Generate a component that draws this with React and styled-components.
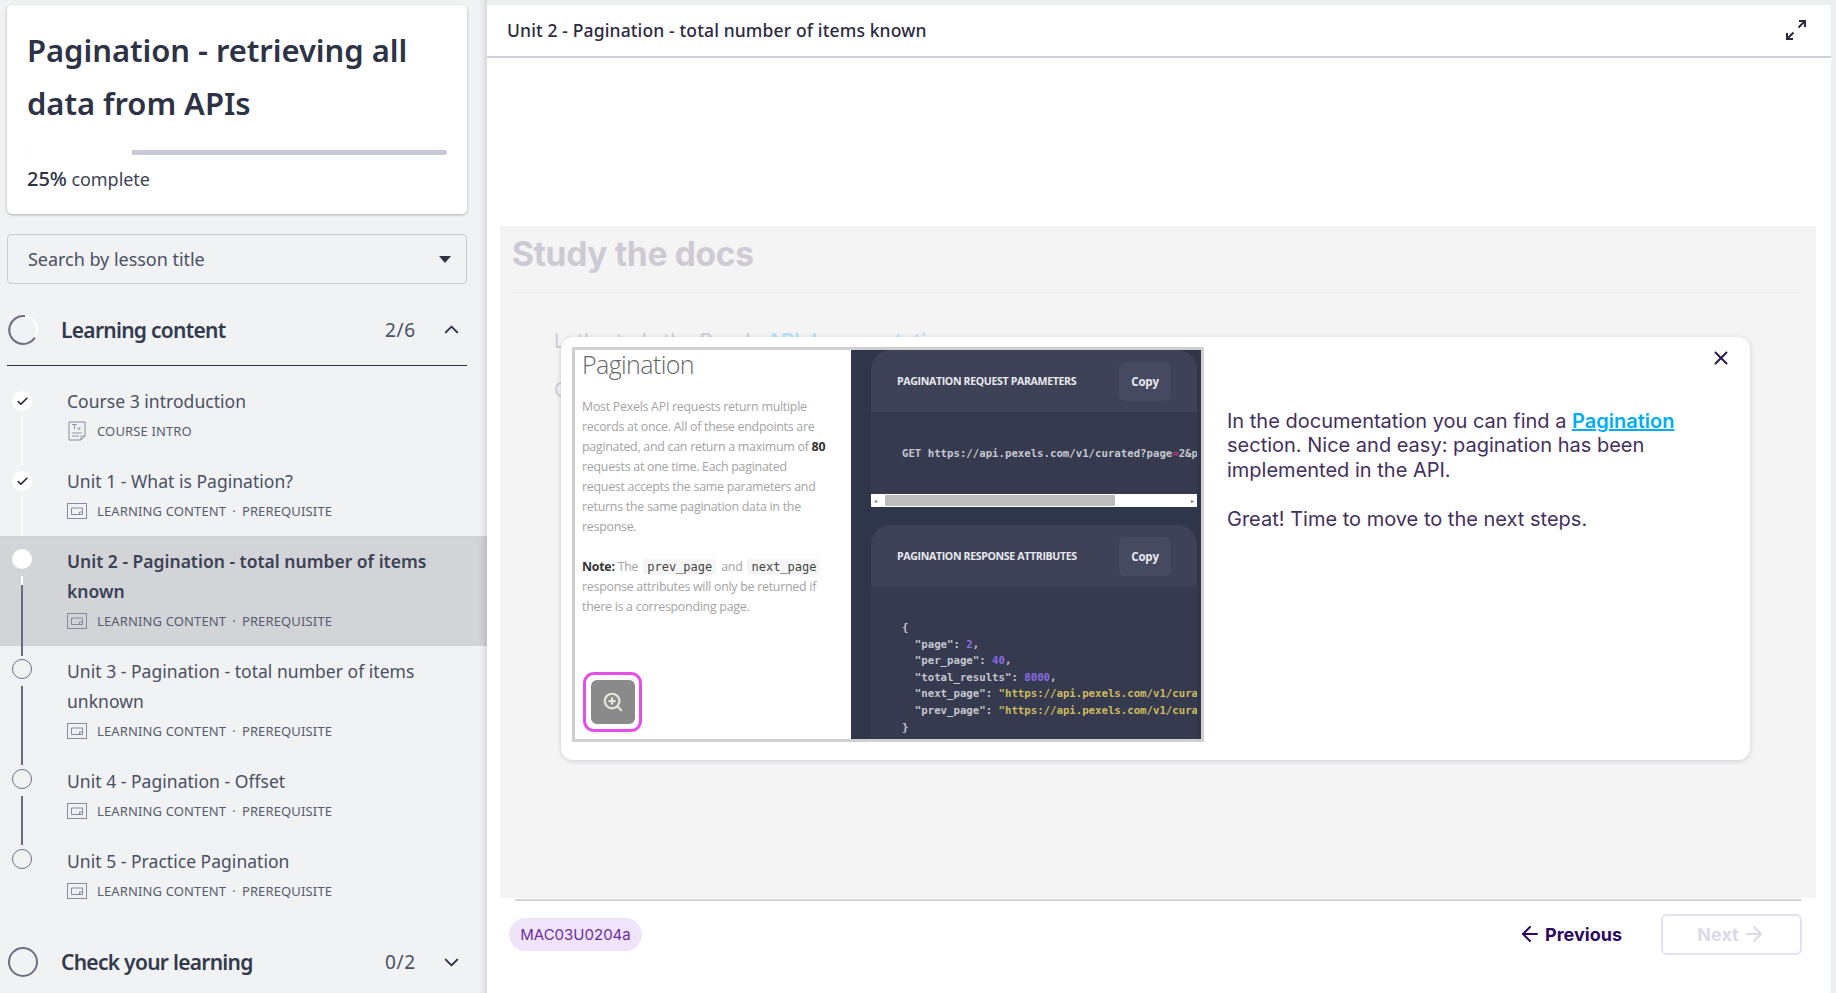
import styled, { createGlobalStyle } from 'styled-components'
import { Check, ChevronDown, ChevronUp, ArrowLeft, ArrowRight, X, ZoomIn } from 'lucide-react'

const GlobalStyle = createGlobalStyle`
  html, body { margin: 0; padding: 0; height: 100%; overflow: hidden; background: #fff; }
  * { box-sizing: border-box; }
`

const units = [
  { title: 'Course 3 introduction', kind: 'doc', meta: 'COURSE INTRO', state: 'done', line: 'light' },
  { title: 'Unit 1 - What is Pagination?', meta: 'LEARNING CONTENT', tag: 'PREREQUISITE', state: 'done', line: 'light' },
  { title: 'Unit 2 - Pagination - total number of items known', meta: 'LEARNING CONTENT', tag: 'PREREQUISITE', state: 'active', line: 'mixed' },
  { title: 'Unit 3 - Pagination - total number of items unknown', meta: 'LEARNING CONTENT', tag: 'PREREQUISITE', state: 'todo', line: 'dark' },
  { title: 'Unit 4 - Pagination - Offset', meta: 'LEARNING CONTENT', tag: 'PREREQUISITE', state: 'todo', line: 'dark' },
  { title: 'Unit 5 - Practice Pagination', meta: 'LEARNING CONTENT', tag: 'PREREQUISITE', state: 'todo' },
]

const Page = styled.div`
  display: grid;
  grid-template-columns: 487px 1fr;
  height: 993px;
  overflow: hidden;
  font-family: 'Noto Sans', sans-serif;
`

const Sidebar = styled.aside`
  background: #f1f2f4;
  padding-top: 5px;
  box-shadow: inset -7px 0 6px -5px rgba(60, 60, 70, 0.18);
  overflow: hidden;
`

const CourseCard = styled.div`
  margin: 0 20px 0 7px;
  height: 209px;
  padding: 19px 20px 0 20px;
  background: #fff;
  border-radius: 5px;
  box-shadow: 0 1px 3px rgba(40, 45, 60, 0.35);
`

const CourseTitle = styled.h1`
  margin: 0;
  font-size: 31px;
  line-height: 53px;
  font-weight: 600;
  letter-spacing: -0.05px;
  color: #2d3345;
`

const Track = styled.div`
  height: 5px;
  margin-top: 20px;
  background: #c7cad6;
  border-radius: 3px;
  overflow: hidden;
`

const Fill = styled.div`
  height: 100%;
  background: #fff;
`

const Complete = styled.p`
  margin: 10px 0 0;
  font-size: 18px;
  letter-spacing: -0.05px;
  color: #3c4256;
  strong { font-weight: 500; font-size: 20px; color: #2d3345; }
`

const SearchBox = styled.div`
  display: flex;
  align-items: center;
  justify-content: space-between;
  height: 50px;
  margin: 20px 20px 0 7px;
  padding: 0 15px 0 20px;
  border: 1px solid #c8cad2;
  border-radius: 4px;
  font-size: 18px;
  letter-spacing: -0.03px;
  color: #4a5063;
`

const Caret = styled.span`
  width: 0;
  height: 0;
  border-left: 6px solid transparent;
  border-right: 6px solid transparent;
  border-top: 7px solid #2d3345;
`

const SectionHead = styled.div`
  display: flex;
  align-items: center;
  height: ${p => p.$h}px;
  margin: ${p => p.$m};
  padding-top: ${p => p.$pt || 0}px;
  color: #2d3345;
  border-bottom: ${p => (p.$ruled ? '1px solid #2d3345' : 'none')};
`

const SectionName = styled.span`
  flex: 1;
  margin-left: 22px;
  font-size: 21px;
  font-weight: 600;
  letter-spacing: -0.72px;
  color: #333a4d;
`

const Count = styled.span`
  width: 55px;
  font-size: 19px;
  letter-spacing: 0.6px;
  color: #4a5063;
`

const ChevronSlot = styled.span`
  display: flex;
  width: 25px;
  margin-right: 2px;
  color: #2d3345;
`

const Row = styled.div`
  position: relative;
  padding: 10px 40px 0 67px;
  height: ${p => p.$h}px;
  background: ${p => (p.$active ? '#d3d4d8' : 'transparent')};
  box-shadow: ${p => (p.$active ? 'inset -7px 0 6px -5px rgba(60, 60, 70, 0.2)' : 'none')};
`

const Node = styled.span`
  position: absolute;
  left: 12px;
  top: ${p => (p.$done ? 15 : 13)}px;
  display: flex;
  align-items: center;
  justify-content: center;
  width: 20px;
  height: 20px;
  border-radius: 50%;
  background: ${p => (p.$filled ? '#fff' : 'transparent')};
  border: ${p => (p.$filled ? 'none' : '1px solid #6b7084')};
  color: #1f2433;
`

const Line = styled.span`
  position: absolute;
  left: 21px;
  top: ${p => p.$top}px;
  height: ${p => p.$len}px;
  width: 2px;
  background: ${p => p.$color};
`

const RowTitle = styled.div`
  font-size: 17.5px;
  line-height: 30px;
  letter-spacing: ${p => (p.$active ? '0' : '0.03px')};
  font-weight: ${p => (p.$active ? 600 : 400)};
  color: ${p => (p.$active ? '#3c4256' : '#4a5063')};
`

const RowMeta = styled.div`
  display: flex;
  align-items: center;
  height: 26px;
  margin-top: 2px;
  font-size: 13px;
  letter-spacing: 0.14px;
  color: #565c6e;
`

const MetaIcon = styled.svg`
  flex: none;
  width: 20px;
  height: 20px;
  margin-right: 10px;
  color: #858a9c;
`

const Dot = styled.span`
  margin: 0 6px;
`

const Main = styled.main`
  display: flex;
  flex-direction: column;
  background: #fff;
  margin-right: 5px;
  padding-top: 5px;
  position: relative;
  &::before {
    content: '';
    position: absolute;
    top: 0;
    left: 0;
    right: -5px;
    height: 5px;
    background: #eceef0;
  }
  &::after {
    content: '';
    position: absolute;
    top: 0;
    bottom: 0;
    right: -5px;
    width: 5px;
    background: #eceef0;
  }
`

const TopBar = styled.header`
  display: flex;
  align-items: center;
  justify-content: space-between;
  height: 53px;
  padding: 0 24px 1px 20px;
  border-bottom: 2px solid #d0ced6;
  font-size: 17.5px;
  font-weight: 500;
  letter-spacing: 0.13px;
  color: #2d2a3e;
`

const Panel = styled.section`
  position: relative;
  height: 672px;
  margin: 168px 15px 0 13px;
  padding: 4px 15px 0 12px;
  background: #f4f4f4;
`

const FadedHeading = styled.h2`
  margin: 0;
  height: 56px;
  font-family: 'Inter', sans-serif;
  font-size: 33.5px;
  line-height: 48px;
  font-weight: 700;
  letter-spacing: -0.3px;
  color: #cdcad4;
`

const FadedRule = styled.div`
  height: 1px;
  margin-top: 6px;
  background: #ececec;
`

const FadedCopy = styled.p`
  margin: ${p => p.$m};
  font-family: 'Inter', sans-serif;
  font-size: 20px;
  line-height: 24px;
  color: #cfcdd6;
  a { color: #b5e3f6; font-weight: 600; }
`

const Modal = styled.div`
  position: absolute;
  left: 61px;
  top: 111px;
  width: 1189px;
  height: 423px;
  display: flex;
  padding: 10px 0 0 11px;
  background: #fff;
  border-radius: 12px;
  box-shadow: 0 1px 5px rgba(60, 50, 80, 0.2);
`

const Shot = styled.div`
  display: flex;
  flex: none;
  width: 632px;
  height: 395px;
  border: 3px solid #cfcfcf;
  overflow: hidden;
`

const ShotDoc = styled.div`
  position: relative;
  flex: none;
  width: 276px;
  padding: 0 19px 0 7px;
  background: #fff;
  font-family: 'Open Sans', sans-serif;
`

const ShotTitle = styled.div`
  margin-top: -1px;
  font-size: 25px;
  font-weight: 300;
  line-height: 30px;
  letter-spacing: -0.6px;
  color: #666;
`

const ShotText = styled.p`
  margin: ${p => p.$m};
  font-size: 12.4px;
  line-height: 20px;
  letter-spacing: -0.26px;
  color: #a3a3a3;
  b { font-weight: 700; color: #333; }
  code {
    margin: 0 2px;
    padding: 1px 4px;
    background: #f5f5f5;
    border-radius: 3px;
    font-family: 'DejaVu Sans Mono', monospace;
    font-size: 12px;
    letter-spacing: 0;
    color: #444;
  }
`

const ZoomFrame = styled.div`
  position: absolute;
  left: 8px;
  bottom: 7px;
  width: 59px;
  height: 60px;
  display: flex;
  align-items: center;
  justify-content: center;
  border: 3px solid #e64ee8;
  border-radius: 11px;
`

const ZoomButton = styled.div`
  display: flex;
  align-items: center;
  justify-content: center;
  width: 44px;
  height: 44px;
  background: #8a8a8a;
  border-radius: 6px;
  color: #e4e6dc;
`

const ShotCode = styled.div`
  flex: 1;
  min-width: 0;
  padding-left: 20px;
  padding-right: 4px;
  background: #30364a;
`

const CodeCard = styled.div`
  height: ${p => p.$h}px;
  margin-top: ${p => p.$mt}px;
  background: #363a4e;
  border-radius: 20px 20px 0 0;
  overflow: hidden;
`

const CodeHead = styled.div`
  display: flex;
  align-items: center;
  justify-content: space-between;
  height: 62px;
  padding: 0 26px 0 26px;
  background: #3d4257;
  font-family: 'Open Sans', sans-serif;
  font-size: 10.6px;
  font-weight: 700;
  letter-spacing: -0.36px;
  color: #e8e9ee;
`

const CopyButton = styled.span`
  display: flex;
  align-items: center;
  justify-content: center;
  width: 52px;
  height: 39px;
  background: #454a60;
  border-radius: 6px;
  font-size: 11.5px;
  letter-spacing: -0.2px;
`

const Code = styled.pre`
  margin: ${p => p.$m};
  padding-left: 31px;
  font-family: 'DejaVu Sans Mono', monospace;
  font-size: 10.7px;
  line-height: 16.6px;
  font-weight: 700;
  white-space: pre;
  overflow: hidden;
  color: #c4c7d0;
  i { font-style: normal; color: #8a6be0; }
  u { text-decoration: none; color: #cdbb60; }
  em { font-style: normal; color: #c0396e; }
`

const ScrollBar = styled.div`
  display: flex;
  align-items: center;
  justify-content: space-between;
  height: 13px;
  padding: 0 3px;
  background: #fff;
  font-size: 6px;
  color: #777;
`

const Thumb = styled.div`
  flex: none;
  width: 230px;
  height: 11px;
  margin-left: 8px;
  margin-right: auto;
  background: #bdbdbd;
`

const Notes = styled.div`
  width: 450px;
  margin: 62px 0 0 23px;
  font-family: 'Inter', sans-serif;
  font-size: 20px;
  line-height: 24.4px;
  color: #43305c;
  p { margin: 0 0 25px; }
  a { color: #00aeef; font-weight: 600; text-decoration: underline; }
`

const CloseButton = styled.span`
  position: absolute;
  top: 10px;
  right: 18px;
  display: flex;
  color: #2c1a4a;
`

const FooterRule = styled.div`
  height: 2px;
  margin: 1px 30px 0 28px;
  background: #d6d0d8;
`

const Footer = styled.footer`
  display: flex;
  align-items: center;
  height: 54px;
  margin-top: 6px;
  padding: 0 29px 0 22px;
`

const CodePill = styled.span`
  display: flex;
  align-items: center;
  justify-content: center;
  width: 133px;
  height: 33px;
  margin-right: auto;
  background: #f0e4fa;
  border-radius: 17px;
  font-family: 'Inter', sans-serif;
  font-size: 15px;
  color: #6a2ea0;
`

const NavButton = styled.span`
  display: flex;
  align-items: center;
  justify-content: center;
  gap: 3px;
  height: 41px;
  width: ${p => p.$w}px;
  margin-left: ${p => p.$ml}px;
  border: ${p => (p.$disabled ? '2px solid #e4e1ef' : 'none')};
  border-radius: 6px;
  font-family: 'Inter', sans-serif;
  font-size: 18px;
  font-weight: 700;
  color: ${p => (p.$disabled ? '#dcd9ea' : '#2a0a5e')};
`

const DocIcon = () => (
  <MetaIcon viewBox="0 0 20 20" fill="none" stroke="currentColor">
    <path d="M2 1h16v14l-4 4H2z" />
    <path d="M5 3.5h5M7.5 3.5v5M10.5 6l3 3M13.5 6l-3 3M5 12h10M5 15h7M14 19v-4h4" strokeWidth=".9" />
  </MetaIcon>
)

const SlideIcon = () => (
  <MetaIcon viewBox="0 0 20 16" fill="none" stroke="currentColor">
    <rect x=".5" y=".5" width="19" height="15" />
    <path d="M4.5 5h11v6.5h-11z" strokeWidth="1" />
    <path d="M15.5 9h-3v2.5" strokeWidth="1" />
  </MetaIcon>
)

const Ring = ({ partial }) => (
  <svg width="32" height="32" viewBox="0 0 32 32" fill="none">
    {partial ? (
      <>
        <circle cx="16" cy="16" r="14" stroke="#fff" strokeWidth="2" />
        <path d="M18 2.1A14 14 0 1 0 28 23.5" stroke="#6a6f82" strokeWidth="2" />
      </>
    ) : (
      <circle cx="16" cy="16" r="14" stroke="#6a6f82" strokeWidth="2" />
    )}
  </svg>
)

const ExpandIcon = () => (
  <svg width="22" height="22" viewBox="0 0 22 22" fill="none" stroke="#2d2a3e" strokeWidth="2">
    <path d="M13.5 8.5L20 2M14 2h6v6" />
    <path d="M8.5 13.5L2 20M8 20H2v-6" />
  </svg>
)

const connectors = {
  light: [[40, 49, '#fff']],
  mixed: [[40, 9, '#fff'], [49, 71, '#666b80']],
  dark: [[40, 79, '#666b80']],
}

const UnitRow = ({ unit }) => {
  const active = unit.state === 'active'
  const done = unit.state === 'done'
  // the three-line rows need more room than the rest
  const tall = unit.title.length > 40
  const lines = connectors[unit.line] || []
  return (
    <Row $h={tall ? 110 : 80} $active={active}>
      <Node $done={done} $filled={done || active}>
        {done && <Check size={13} strokeWidth={3} />}
      </Node>
      {lines.map(([top, len, color]) => (
        <Line key={top} $top={top} $len={unit.line === 'light' || tall ? len : len - 30} $color={color} />
      ))}
      <RowTitle $active={active}>{unit.title}</RowTitle>
      <RowMeta>
        {unit.kind === 'doc' ? <DocIcon /> : <SlideIcon />}
        {unit.meta}
        {unit.tag && <Dot>·</Dot>}
        {unit.tag}
      </RowMeta>
    </Row>
  )
}

const App = () => (
  <Page>
    <GlobalStyle />
    <Sidebar>
      <CourseCard>
        <CourseTitle>Pagination - retrieving all data from APIs</CourseTitle>
        <Track>
          <Fill style={{ width: '25%' }} />
        </Track>
        <Complete>
          <strong>25%</strong> complete
        </Complete>
      </CourseCard>
      <SearchBox>
        Search by lesson title
        <Caret />
      </SearchBox>
      <SectionHead $h={82} $pt={10} $m="0 20px 10px 7px" $ruled>
        <Ring partial />
        <SectionName>Learning content</SectionName>
        <Count>2/6</Count>
        <ChevronSlot>
          <ChevronUp size={23} strokeWidth={2} />
        </ChevronSlot>
      </SectionHead>
      {units.map(unit => (
        <UnitRow key={unit.title} unit={unit} />
      ))}
      <SectionHead $h={60} $m="16px 20px 0 7px">
        <Ring />
        <SectionName>Check your learning</SectionName>
        <Count>0/2</Count>
        <ChevronSlot>
          <ChevronDown size={23} strokeWidth={2} />
        </ChevronSlot>
      </SectionHead>
    </Sidebar>
    <Main>
      <TopBar>
        Unit 2 - Pagination - total number of items known
        <ExpandIcon />
      </TopBar>
      <Panel>
        <FadedHeading>Study the docs</FadedHeading>
        <FadedRule />
        <FadedCopy $m="36px 0 0 42px">
          Let's study the Pexels <a>API documentation</a>.
        </FadedCopy>
        <FadedCopy $m="25px 0 0 42px">Check how it handles long lists of results.</FadedCopy>
        <Modal>
          <Shot>
            <ShotDoc>
              <ShotTitle>Pagination</ShotTitle>
              <ShotText $m="18px 0 0">
                Most Pexels API requests return multiple records at once. All of these endpoints are paginated, and can
                return a maximum of <b>80</b> requests at one time. Each paginated request accepts the same parameters
                and returns the same pagination data in the response.
              </ShotText>
              <ShotText $m="20px 0 0">
                <b>Note:</b> The <code>prev_page</code> and <code>next_page</code> response attributes will only be
                returned if there is a corresponding page.
              </ShotText>
              <ZoomFrame>
                <ZoomButton>
                  <ZoomIn size={22} strokeWidth={2.4} />
                </ZoomButton>
              </ZoomFrame>
            </ShotDoc>
            <ShotCode>
              <CodeCard $h={144} $mt={0}>
                <CodeHead>
                  PAGINATION REQUEST PARAMETERS
                  <CopyButton>Copy</CopyButton>
                </CodeHead>
                <Code $m="34px 0 0">
                  GET https://api.pexels.com/v1/curated?page<em>=</em>2&per_page=40
                </Code>
              </CodeCard>
              <ScrollBar>
                ◂<Thumb />▸
              </ScrollBar>
              <CodeCard $h={218} $mt={18}>
                <CodeHead>
                  PAGINATION RESPONSE ATTRIBUTES
                  <CopyButton>Copy</CopyButton>
                </CodeHead>
                <Code $m="33px 0 0">
                  {'{\n  "page": '}
                  <i>2</i>
                  {',\n  "per_page": '}
                  <i>40</i>
                  {',\n  "total_results": '}
                  <i>8000</i>
                  {',\n  "next_page": '}
                  <u>"https://api.pexels.com/v1/curated"</u>
                  {',\n  "prev_page": '}
                  <u>"https://api.pexels.com/v1/curated"</u>
                  {'\n}'}
                </Code>
              </CodeCard>
            </ShotCode>
          </Shot>
          <Notes>
            <p>
              In the documentation you can find a <a>Pagination</a> section. Nice and easy: pagination has been
              implemented in the API.
            </p>
            <p>Great! Time to move to the next steps.</p>
          </Notes>
          <CloseButton>
            <X size={22} strokeWidth={2.2} />
          </CloseButton>
        </Modal>
      </Panel>
      <FooterRule />
      <Footer>
        <CodePill>MAC03U0204a</CodePill>
        <NavButton $w={106}>
          <ArrowLeft size={24} />
          Previous
        </NavButton>
        <NavButton $w={141} $ml={38} $disabled>
          Next
          <ArrowRight size={24} />
        </NavButton>
      </Footer>
    </Main>
  </Page>
)

export default App
